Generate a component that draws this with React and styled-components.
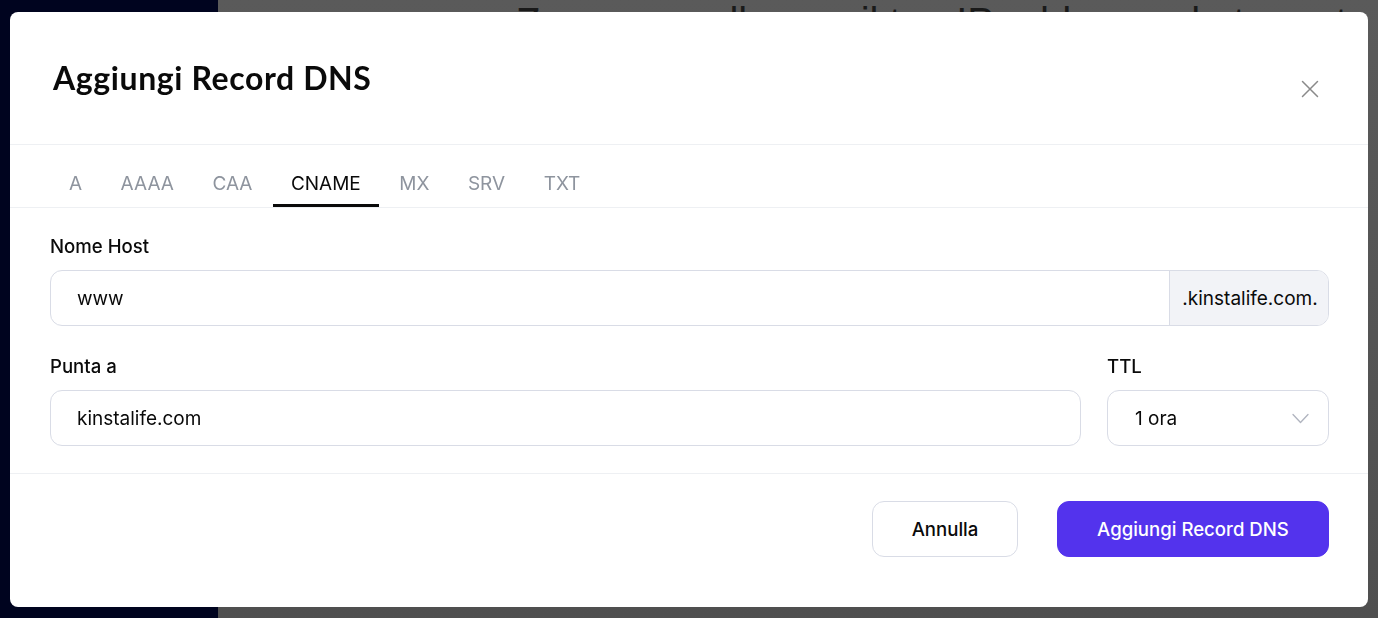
import React from "react";
import styled, { createGlobalStyle } from "styled-components";

const GlobalStyle = createGlobalStyle`
  html, body { margin: 0; padding: 0; }
  body {
    font-family: Inter, "Noto Sans", Roboto, sans-serif;
    color: #0b0b0f;
    overflow: hidden;
  }
  * { box-sizing: border-box; }
`;

const Page = styled.div`
  display: flex;
  width: 100%;
  height: 618px;
`;

const Sidebar = styled.aside`
  width: 218px;
  flex: none;
  background: #00041f;
`;

const Main = styled.main`
  flex: 1;
  background: linear-gradient(#5a5a5a, #4f4f4f);
  padding: 0 0 0 298px;
  overflow: hidden;
`;

const BackText = styled.p`
  margin: 0;
  font-family: "Liberation Sans", Arial, sans-serif;
  font-size: 40px;
  line-height: 56px;
  color: #1a1a1a;
  white-space: nowrap;
  transform: translateY(-6px);
`;

const Overlay = styled.div`
  position: fixed;
  inset: 0;
  display: flex;
  padding: 12px 10px 11px 10px;
`;

const Modal = styled.section`
  flex: 1;
  display: flex;
  flex-direction: column;
  background: #ffffff;
  border-radius: 8px;
  overflow: hidden;
`;

const Header = styled.header`
  height: 133px;
  flex: none;
  display: flex;
  align-items: center;
  justify-content: space-between;
  padding: 0 48px 0 43px;
  border-bottom: 1px solid #eef0f3;
`;

const Title = styled.h2`
  margin: 0 0 2px 0;
  font-family: Lato, Inter, sans-serif;
  font-weight: 700;
  font-size: 32px;
  letter-spacing: 0.6px;
  color: #0a0a0a;
`;

const CloseButton = styled.button`
  margin-top: 22px;
  width: 20px;
  height: 20px;
  padding: 0;
  border: 0;
  background: transparent;
  display: flex;
  align-items: center;
  justify-content: center;
  cursor: pointer;
`;

const TabBar = styled.nav`
  height: 63px;
  flex: none;
  display: flex;
  gap: 2.5px;
  padding: 0 0 0 41px;
  border-bottom: 1px solid #eef0f3;
`;

const Tab = styled.button`
  height: 62px;
  padding: 17px 18px 0 18px;
  border: 0;
  border-bottom: 3px solid ${(p) => (p.$active ? "#0a0a0a" : "transparent")};
  background: transparent;
  font-family: Inter, sans-serif;
  font-size: 19px;
  font-weight: 400;
  color: ${(p) => (p.$active ? "#0a0a0a" : "#8e949e")};
  display: flex;
  align-items: center;
  cursor: pointer;
`;

const Body = styled.div`
  flex: none;
  display: flex;
  flex-direction: column;
  gap: 28px;
  padding: 26px 39px 27px 40px;
  border-bottom: 1px solid #eef0f3;
`;

const Row = styled.div`
  display: flex;
  gap: 26px;
`;

const Field = styled.div`
  display: flex;
  flex-direction: column;
  flex: ${(p) => (p.$width ? `0 0 ${p.$width}px` : "1")};
`;

const Label = styled.label`
  font-size: 18.6px;
  line-height: 24px;
  font-weight: 500;
  margin-bottom: 12px;
  color: #0a0a0a;
`;

const InputGroup = styled.div`
  display: flex;
  height: 56px;
  border: 1px solid #d9dce6;
  border-radius: 12px;
  overflow: hidden;
  background: #fff;
`;

const Input = styled.input`
  flex: 1;
  min-width: 0;
  border: 0;
  outline: none;
  padding: 0 0 0 26px;
  font-family: Inter, sans-serif;
  font-size: 19px;
  color: #0a0a0a;
  background: transparent;
`;

const Addon = styled.span`
  flex: none;
  width: 159px;
  display: flex;
  align-items: center;
  justify-content: center;
  padding-left: 2px;
  background: #f2f3f7;
  border-left: 1px solid #d9dce6;
  font-size: 19px;
  color: #0a0a0a;
`;

const Select = styled.div`
  height: 56px;
  display: flex;
  align-items: center;
  justify-content: space-between;
  padding: 0 19px 0 27px;
  border: 1px solid #d9dce6;
  border-radius: 12px;
  font-size: 19px;
  color: #0a0a0a;
`;

const Footer = styled.footer`
  flex: 1;
  display: flex;
  justify-content: flex-end;
  align-items: flex-start;
  gap: 39px;
  padding: 27px 39px 0 0;
`;

const Button = styled.button`
  height: 56px;
  width: ${(p) => p.$w}px;
  border-radius: 12px;
  font-family: Inter, sans-serif;
  font-size: 18.6px;
  font-weight: 500;
  cursor: pointer;
  border: 1px solid ${(p) => (p.$primary ? "#5333ed" : "#d9dce6")};
  background: ${(p) => (p.$primary ? "#5333ed" : "#ffffff")};
  color: ${(p) => (p.$primary ? "#ffffff" : "#0a0a0a")};
`;

const tabs = ["A", "AAAA", "CAA", "CNAME", "MX", "SRV", "TXT"];

export default function App() {
  return (
    <>
      <GlobalStyle />
      <Page>
        <Sidebar />
        <Main>
          <BackText>Zone per collegare il tuo IP address e la tua rete</BackText>
          <BackText>Scegli il tipo di record che vuoi aggiungere qui e</BackText>
        </Main>
      </Page>
      <Overlay>
        <Modal>
          <Header>
            <Title>Aggiungi Record DNS</Title>
            <CloseButton aria-label="Chiudi">
              <svg width="18" height="18" viewBox="0 0 18 18" fill="none">
                <path d="M1.5 1.5 L16.5 16.5 M16.5 1.5 L1.5 16.5" stroke="#8a8a8a" strokeWidth="1.5" strokeLinecap="round" />
              </svg>
            </CloseButton>
          </Header>
          <TabBar>
            {tabs.map((t) => (
              <Tab key={t} $active={t === "CNAME"}>
                {t}
              </Tab>
            ))}
          </TabBar>
          <Body>
            <Field>
              <Label>Nome Host</Label>
              <InputGroup>
                <Input defaultValue="www" />
                <Addon>.kinstalife.com.</Addon>
              </InputGroup>
            </Field>
            <Row>
              <Field>
                <Label>Punta a</Label>
                <InputGroup>
                  <Input defaultValue="kinstalife.com" />
                </InputGroup>
              </Field>
              <Field $width={222}>
                <Label>TTL</Label>
                <Select>
                  <span>1 ora</span>
                  <svg width="17" height="11" viewBox="0 0 17 11" fill="none">
                    <path d="M1 1.5 L8.5 9.5 L16 1.5" stroke="#b0b4bf" strokeWidth="1.3" strokeLinecap="round" strokeLinejoin="round" />
                  </svg>
                </Select>
              </Field>
            </Row>
          </Body>
          <Footer>
            <Button $w={146}>Annulla</Button>
            <Button $w={272} $primary>Aggiungi Record DNS</Button>
          </Footer>
        </Modal>
      </Overlay>
    </>
  );
}
